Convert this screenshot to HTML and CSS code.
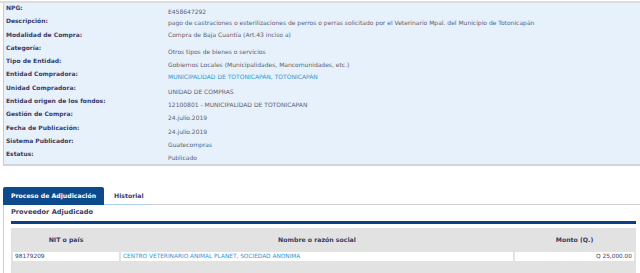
FILE: index.html
```html
<!DOCTYPE html>
<html lang="es">
<head>
    <meta charset="UTF-8">
    <meta name="viewport" content="width=device-width, initial-scale=1.0">
    <title>Concurso E458647292</title>
    <link rel="stylesheet" href="styles.css">
</head>
<body>
    <div class="top-rule"></div>

    <!-- Datos generales del concurso -->
    <section class="details">
        <div class="row"><span class="label">NPG:</span><span class="value">E458647292</span></div>
        <div class="row"><span class="label">Descripción:</span><span class="value low">pago de castraciones o esterilizaciones de perros o perras solicitado por el Veterinario Mpal. del Municipio de Totonicapán</span></div>
        <div class="row"><span class="label">Modalidad de Compra:</span><span class="value flat">Compra de Baja Cuantía (Art.43 inciso a)</span></div>
        <div class="row"><span class="label">Categoría:</span><span class="value">Otros tipos de bienes o servicios</span></div>
        <div class="row"><span class="label">Tipo de Entidad:</span><span class="value">Gobiernos Locales (Municipalidades, Mancomunidades, etc.)</span></div>
        <div class="row"><span class="label">Entidad Compradora:</span><span class="value link">MUNICIPALIDAD DE TOTONICAPÁN, TOTONICAPÁN</span></div>
        <div class="row"><span class="label">Unidad Compradora:</span><span class="value">UNIDAD DE COMPRAS</span></div>
        <div class="row"><span class="label">Entidad origen de los fondos:</span><span class="value">12100801 - MUNICIPALIDAD DE TOTONICAPAN</span></div>
        <div class="row"><span class="label">Gestión de Compra:</span><span class="value">24.julio.2019</span></div>
        <div class="row"><span class="label">Fecha de Publicación:</span><span class="value">24.julio.2019</span></div>
        <div class="row"><span class="label">Sistema Publicador:</span><span class="value">Guatecompras</span></div>
        <div class="row"><span class="label">Estatus:</span><span class="value">Publicado</span></div>
    </section>

    <!-- Pestañas -->
    <nav class="tabs">
        <a class="tab active" href="#">Proceso de Adjudicación</a>
        <a class="tab" href="#">Historial</a>
        <span class="tab-fill"></span>
    </nav>

    <div class="tab-body">
        <h3 class="section-title">Proveedor Adjudicado</h3>
        <div class="grid-wrap">
            <table class="awards">
                <thead>
                    <tr>
                        <th class="col-nit">NIT o país</th>
                        <th class="col-name">Nombre o razón social</th>
                        <th class="col-amount">Monto (Q.)</th>
                    </tr>
                </thead>
                <tbody>
                    <tr>
                        <td>98179209</td>
                        <td><a href="#">CENTRO VETERINARIO ANIMAL PLANET, SOCIEDAD ANONIMA</a></td>
                        <td class="amount">Q 25,000.00</td>
                    </tr>
                </tbody>
            </table>
        </div>
    </div>
</body>
</html>
```

FILE: styles.css
```css
body {
    margin: 0;
    font-family: 'DejaVu Sans', Verdana, sans-serif;
    background: #fff;
    color: #3b3b66;
    overflow: hidden;
}

.top-rule {
    margin-top: 1px;
    border-top: 2px solid #dcdcdc;
}

.details {
    margin-left: 3px;
    padding-top: 1px;
    background: #e6f1fc;
    border-left: 1px solid #c9cdd2;
    border-bottom: 2px solid #d2d4d8;
}

.row {
    display: grid;
    grid-template-columns: 162px 1fr;
    height: 13.3px;
    padding-left: 2px;
}

.label {
    font-size: 6px;
    font-weight: bold;
    line-height: 8px;
    color: #3b3b66;
    white-space: nowrap;
}

.value {
    font-size: 6px;
    line-height: 8px;
    padding-top: 4px;
    color: #5e5e70;
    white-space: nowrap;
}

.value.low {
    padding-top: 2px;
}

.value.flat {
    padding-top: 0;
}

.value.link {
    color: #2e97d4;
    padding-top: 3px;
}

/* Tabs */
.tabs {
    display: flex;
    margin-top: 21px;
    margin-left: 3px;
    height: 18px;
}

.tab {
    display: flex;
    align-items: center;
    box-sizing: border-box;
    font-size: 6.2px;
    font-weight: bold;
    white-space: nowrap;
    text-decoration: none;
    color: #3b3b66;
    padding: 0 0 0 10px;
    width: 48px;
    border-bottom: 1px solid #a9cdea;
}

.tab.active {
    width: 101px;
    justify-content: center;
    padding: 0;
    background: #0d4a8c;
    color: #fff;
    border-bottom: none;
    border-radius: 2px 2px 0 0;
}

.tab-fill {
    flex: 1;
    border-bottom: 1px solid #cfcfcf;
}

.tab-body {
    margin-left: 3px;
    border-left: 1px solid #cfcfcf;
    padding-left: 7px;
    padding-top: 3px;
}

.section-title {
    margin: 0 4px 0 0;
    font-size: 6.6px;
    line-height: 9px;
    color: #3b3b66;
    padding-bottom: 4px;
    border-bottom: 3px solid #0d3f85;
}

.grid-wrap {
    margin: 4px 4px 0 0;
    background: #e2e2e2;
    padding-bottom: 14px;
}

.awards {
    width: 100%;
    border-spacing: 2px;
    table-layout: fixed;
}

.awards th {
    height: 20px;
    font-size: 6.2px;
    font-weight: bold;
    color: #3b3b66;
    text-align: center;
    padding: 0;
}

.col-nit {
    width: 106px;
}

.col-amount {
    width: 119px;
}

.awards td {
    background: #fff;
    height: 9px;
    padding: 0 2px;
    font-size: 5.8px;
    line-height: 9px;
    color: #3b3b66;
    white-space: nowrap;
}

.awards td a {
    color: #2e97d4;
    text-decoration: none;
}

.awards td.amount {
    text-align: right;
}
```
